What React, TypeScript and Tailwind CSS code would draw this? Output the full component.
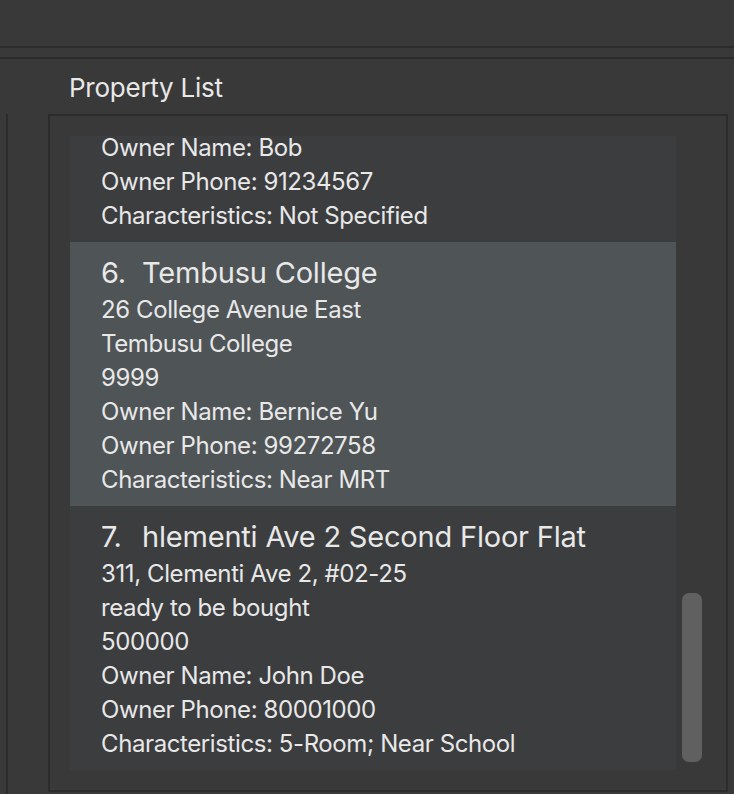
import React from 'react';

type Property = {
  index: number;
  name: string;
  address: string;
  description: string;
  price: string;
  ownerName: string;
  ownerPhone: string;
  characteristics: string;
};

const properties: Property[] = [
  {
    index: 6,
    name: 'Tembusu College',
    address: '26 College Avenue East',
    description: 'Tembusu College',
    price: '9999',
    ownerName: 'Bernice Yu',
    ownerPhone: '99272758',
    characteristics: 'Near MRT'
  },
  {
    index: 7,
    name: 'hlementi Ave 2 Second Floor Flat',
    address: '311, Clementi Ave 2, #02-25',
    description: 'ready to be bought',
    price: '500000',
    ownerName: 'John Doe',
    ownerPhone: '80001000',
    characteristics: '5-Room; Near School'
  }
];

function Line({ children }: { children: React.ReactNode }) {
  return <div className="h-[34px] leading-[34px] text-[24px] tracking-[-0.4px] whitespace-nowrap">{children}</div>;
}

function PropertyCard({ p, selected }: { p: Property; selected?: boolean }) {
  return <div className={`h-[264px] pl-[31px] pt-[12px] ${selected ? 'bg-[#4f5457]' : 'bg-[#3c3d3f]'}`}>
      <div className="h-[39px] leading-[38px] text-[29px] tracking-[-0.2px] whitespace-nowrap flex">
        <span className="w-[41px]">{p.index}.</span>
        <span>{p.name}</span>
      </div>
      <Line>{p.address}</Line>
      <Line>{p.description}</Line>
      <Line>{p.price}</Line>
      <Line>Owner Name: {p.ownerName}</Line>
      <Line>Owner Phone: {p.ownerPhone}</Line>
      <Line>Characteristics: {p.characteristics}</Line>
    </div>;
}

export default function App() {
  return <div className="w-[734px] h-[794px] overflow-hidden bg-[#393939] text-[#e8e8e8] flex flex-col" style={{ fontFamily: 'Inter, "Noto Sans", sans-serif' }}>
      {/* menu / command area */}
      <div className="h-[46px] shrink-0" />
      <div className="h-[13px] shrink-0 border-y-2 border-[#2c2c2c]" />
      <div className="flex-1 flex min-h-0">
        {/* left panel edge */}
        <div className="w-[8px] shrink-0 flex flex-col">
          <div className="h-[55px]" />
          <div className="flex-1 border-r-2 border-[#2c2c2c]" />
        </div>
        <div className="w-[40px] shrink-0" />
        <div className="flex-1 flex flex-col min-w-0">
          <div className="h-[55px] pl-[21px] pt-[13px] text-[26px] leading-[32px] tracking-[-0.25px]">Property List</div>
          <div className="flex-1 mr-[6px] mb-[2px] border-2 border-[#2c2c2c] p-[20px] flex min-h-0">
            <div className="w-[606px] overflow-hidden">
              <div className="-mt-[5px] bg-[#3c3d3f] pl-[31px] pb-[9px]">
                <Line>Owner Name: Bob</Line>
                <Line>Owner Phone: 91234567</Line>
                <Line>Characteristics: Not Specified</Line>
              </div>
              {properties.map(p => <PropertyCard key={p.index} p={p} selected={p.index === 6} />)}
            </div>
            <div className="w-[30px] flex flex-col pl-[6px] pr-[4px]">
              <div className="flex-1" />
              <div className="h-[169px] mb-[8px] rounded-[7px] bg-[#606060]" />
            </div>
          </div>
        </div>
      </div>
    </div>;
}
